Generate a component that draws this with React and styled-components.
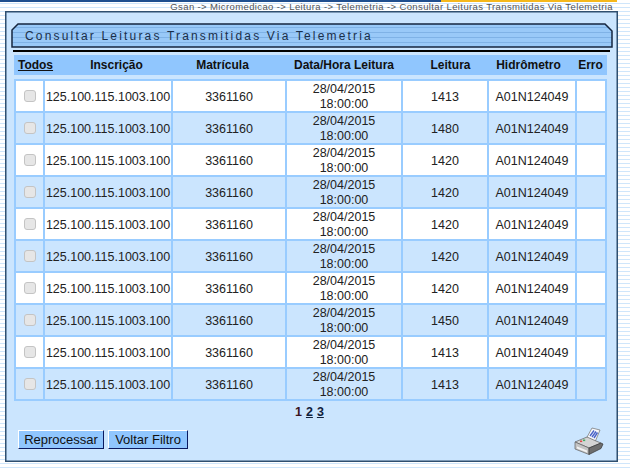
import React from "react"
import styled, { createGlobalStyle } from "styled-components"

const rows = [
  "1413", "1480", "1420", "1420", "1420",
  "1420", "1420", "1450", "1413", "1413",
]

const App = () => (
  <>
    <GlobalStyle />
    <Page>
      <TopRule />
      <Breadcrumb>
        Gsan -&gt; Micromedicao -&gt; Leitura -&gt; Telemetria -&gt; Consultar Leituras Transmitidas Via Telemetria
      </Breadcrumb>
      <Panel>
        <TitleBar>
          <svg width="602" height="25" viewBox="0 0 602 25">
            <defs>
              <pattern id="titleStripes" width="602" height="5" patternUnits="userSpaceOnUse">
                <rect width="602" height="5" fill="#99c9f8" />
                <rect y="4" width="602" height="1" fill="#7fb2e6" />
              </pattern>
            </defs>
            <path
              d="M1 24 V7 L7 1 H594 L601 8 V24 Z"
              fill="url(#titleStripes)"
              stroke="#16263f"
              strokeWidth="1.5"
            />
          </svg>
          <Title>Consultar Leituras Transmitidas Via Telemetria</Title>
        </TitleBar>
        <Rule />
        <HeaderRow>
          <HeadCell $w={43} $link>Todos</HeadCell>
          <HeadCell $w={119}>Inscrição</HeadCell>
          <HeadCell $w={93}>Matrícula</HeadCell>
          <HeadCell $w={150}>Data/Hora Leitura</HeadCell>
          <HeadCell $w={63}>Leitura</HeadCell>
          <HeadCell $w={93}>Hidrômetro</HeadCell>
          <HeadCell $w={31}>Erro</HeadCell>
        </HeaderRow>
        <Table>
          <tbody>
            {rows.map((leitura, i) => (
              <Row key={i} $alt={i % 2 === 1}>
                <CheckCell><FakeCheck /></CheckCell>
                <Cell $w={126}>125.100.115.1003.100</Cell>
                <Cell $w={112}>3361160</Cell>
                <Cell $w={114} $twoLines>28/04/2015<br />18:00:00</Cell>
                <Cell $w={84}>{leitura}</Cell>
                <Cell $w={86}>A01N124049</Cell>
                <Cell $w={28} />
              </Row>
            ))}
          </tbody>
        </Table>
        <Pager>
          <b>1</b> <PageLink>2</PageLink> <PageLink>3</PageLink>
        </Pager>
        <Footer>
          <Buttons>
            <Button $w={86}>Reprocessar</Button>
            <Button $w={80}>Voltar Filtro</Button>
          </Buttons>
          <PrinterIcon />
        </Footer>
      </Panel>
    </Page>
  </>
)

export default App

const PrinterIcon = () => (
  <PrinterSvg width="30" height="28" viewBox="0 0 30 28">
    <path d="M12 12 L18 1 L26 3 L21 15 Z" fill="#f6f7fb" stroke="#6f6f6f" strokeWidth="0.7" />
    <path d="M16 9 L20 3.5 M18 10 L22 4.5 M20 11 L23.5 5.5" stroke="#4a63c8" strokeWidth="1.4" />
    <path d="M1 15 L13 10 L22 14 L27 16 L15 21 Z" fill="#d4d4d4" stroke="#5f5f5f" strokeWidth="0.7" />
    <path d="M1 15 V22 L15 27.5 V21 Z" fill="#c4c4c4" stroke="#5f5f5f" strokeWidth="0.7" />
    <path d="M15 21 L27 16 L29 17 L27 21.5 L15 27.5 Z" fill="#6e6e6e" stroke="#333" strokeWidth="0.7" />
    <path d="M3 19.5 L13 23.5 V25.5 L3 21.5 Z" fill="#f2f2f2" />
    <rect x="6" y="13.5" width="2.2" height="1.6" fill="#e04848" />
    <rect x="9" y="12.5" width="2.2" height="1.6" fill="#40b060" />
  </PrinterSvg>
)

const GlobalStyle = createGlobalStyle`
  html, body {
    margin: 0;
    padding: 0;
  }
  body {
    font-family: "Liberation Sans", Arial, sans-serif;
  }
`

const Page = styled.div`
  width: 630px;
  height: 469px;
  overflow: hidden;
  position: relative;
  background: repeating-linear-gradient(
    to bottom,
    #ffffff 0,
    #ffffff 3px,
    #cfe6fb 3px,
    #cfe6fb 4px
  );
`

const TopRule = styled.div`
  height: 2px;
  background: linear-gradient(to right, #1f4f8f 0, #1f4f8f 70%, #f5b81c 70%, #f5b81c 98%, #ffffff 98%);
`

const Breadcrumb = styled.div`
  height: 9px;
  line-height: 9px;
  padding-right: 17px;
  text-align: right;
  font-size: 9.5px;
  letter-spacing: 0.38px;
  white-space: nowrap;
  color: #555;
`

const Panel = styled.div`
  box-sizing: border-box;
  width: 613px;
  height: 451px;
  margin-left: 5px;
  padding: 11px 0 0 5px;
  background: #cbe5fe;
  border: 1px solid #2f4f6f;
  box-shadow: inset 0 0 0 0.5px #2f4f6f;
`

const TitleBar = styled.div`
  position: relative;
  height: 25px;
  width: 602px;
  svg {
    display: block;
  }
`

const Title = styled.span`
  position: absolute;
  left: 14px;
  top: 6px;
  font-size: 12px;
  line-height: 15px;
  letter-spacing: 2.18px;
  color: #1a2f4a;
  white-space: nowrap;
`

const Rule = styled.div`
  width: 597px;
  height: 2px;
  margin: 2px 0 3px 2px;
  background: #000;
`

const HeaderRow = styled.div`
  display: flex;
  width: 593px;
  height: 20px;
  margin-left: 3px;
  background: #90c6fe;
`

const HeadCell = styled.div`
  flex: 0 0 ${p => p.$w}px;
  text-align: center;
  font-size: 12px;
  line-height: 21px;
  font-weight: bold;
  color: #111;
  text-decoration: ${p => (p.$link ? "underline" : "none")};
  white-space: nowrap;
`

const Table = styled.table`
  width: 593px;
  margin: 4px 0 0 3px;
  table-layout: fixed;
  border-collapse: separate;
  border-spacing: 2px;
  background: #99ccff;
`

const Row = styled.tr`
  height: 30px;
  background: ${p => (p.$alt ? "#cbe5fe" : "#ffffff")};
`

const Cell = styled.td`
  box-sizing: border-box;
  width: ${p => p.$w}px;
  padding: 1px 0 0;
  text-align: center;
  font-size: 12.5px;
  line-height: ${p => (p.$twoLines ? "14.5px" : "14px")};
  color: #222;
  white-space: nowrap;
`

const CheckCell = styled.td`
  width: 27px;
  padding: 0;
  text-align: center;
`

const FakeCheck = styled.span`
  display: block;
  box-sizing: border-box;
  width: 12px;
  height: 12px;
  margin: 0 auto;
  border: 1px solid #c4c4c4;
  border-radius: 3px;
  background: #e6e6e6;
`

const Pager = styled.div`
  margin-top: 4px;
  height: 15px;
  padding-left: 284px;
  font-size: 12.5px;
  line-height: 15px;
  word-spacing: 0.5px;
  color: #3a1420;
  font-weight: bold;
`

const PageLink = styled.span`
  color: #10203c;
  text-decoration: underline;
`

const Footer = styled.div`
  display: flex;
  justify-content: space-between;
  align-items: flex-start;
  width: 586px;
  margin: 10px 0 0 7px;
`

const Buttons = styled.div`
  display: flex;
  gap: 4px;
`

const Button = styled.button`
  box-sizing: border-box;
  width: ${p => p.$w}px;
  height: 19px;
  padding: 0;
  font-family: "Liberation Sans", Arial, sans-serif;
  font-size: 13px;
  color: #111;
  background: #90c6fe;
  border: 1px solid;
  border-color: #fff #0a1a60 #0a1a60 #fff;
`

const PrinterSvg = styled.svg`
  flex: none;
  margin-top: -3px;
`
